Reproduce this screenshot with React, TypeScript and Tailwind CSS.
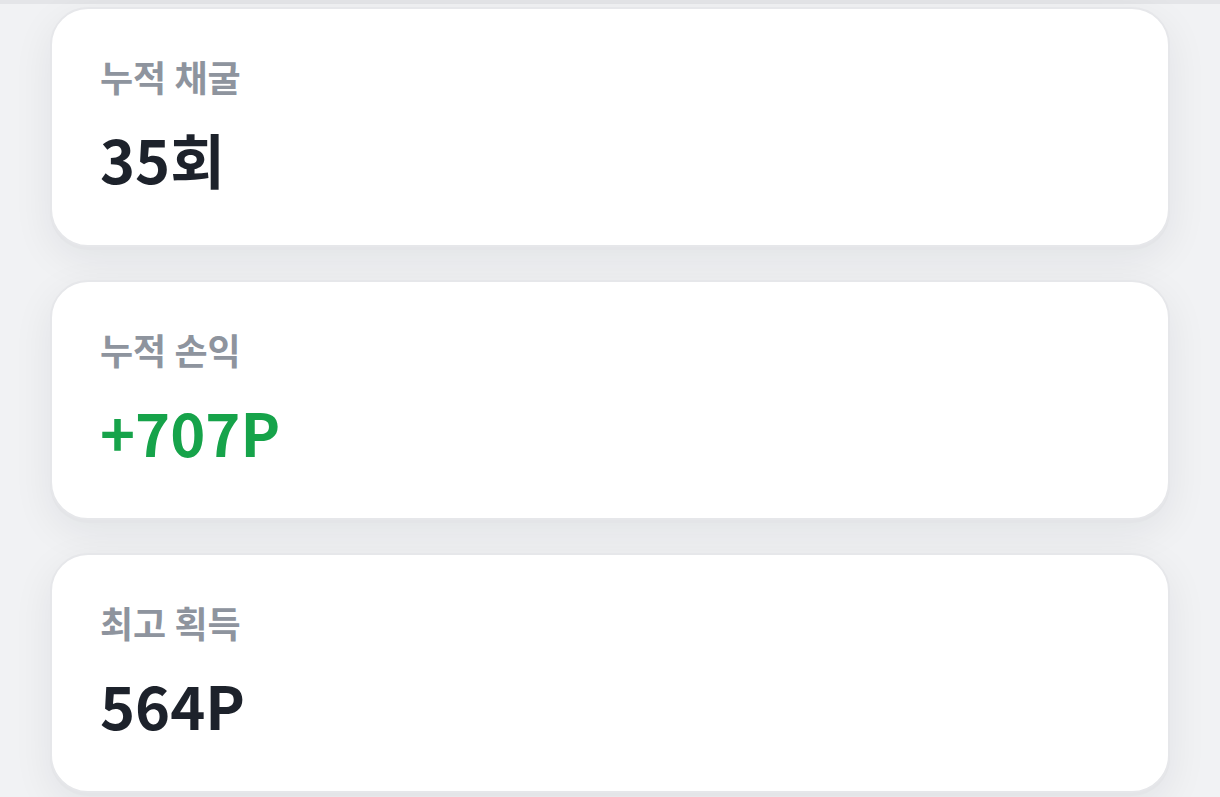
import React from 'react';

const stats = [
  { label: '누적 채굴', value: '35회', tone: 'text-[#1d222b]' },
  { label: '누적 손익', value: '+707P', tone: 'text-[#16a34a]' },
  { label: '최고 획득', value: '564P', tone: 'text-[#1d222b]' },
];

function StatCard({ label, value, tone }: { label: string; value: string; tone: string }) {
  return (
    <div className="rounded-[38px] border-2 border-[#e6e7ea] bg-white pl-[48px] pt-[46px] pb-[51px] shadow-[0_3px_0_#e4e5e8,0_12px_40px_rgba(17,24,39,0.07)]">
      <div className="text-[36px] leading-[42px] font-bold text-[#8e949e]">{label}</div>
      <div className={`mt-[25px] text-[59.5px] leading-[72px] font-bold ${tone}`}>{value}</div>
    </div>
  );
}

export default function App() {
  return (
    <div
      className="min-h-[797px] w-[1220px] overflow-hidden bg-[#f1f2f4]"
      style={{ fontFamily: '"Noto Sans CJK KR", "Noto Sans", sans-serif' }}
    >
      <div className="h-[4px] bg-[#e4e5e8]" />
      <div className="flex flex-col gap-[33px] px-[50px] pt-[3px]">
        {stats.map((s) => (
          <StatCard key={s.label} {...s} />
        ))}
      </div>
    </div>
  );
}
